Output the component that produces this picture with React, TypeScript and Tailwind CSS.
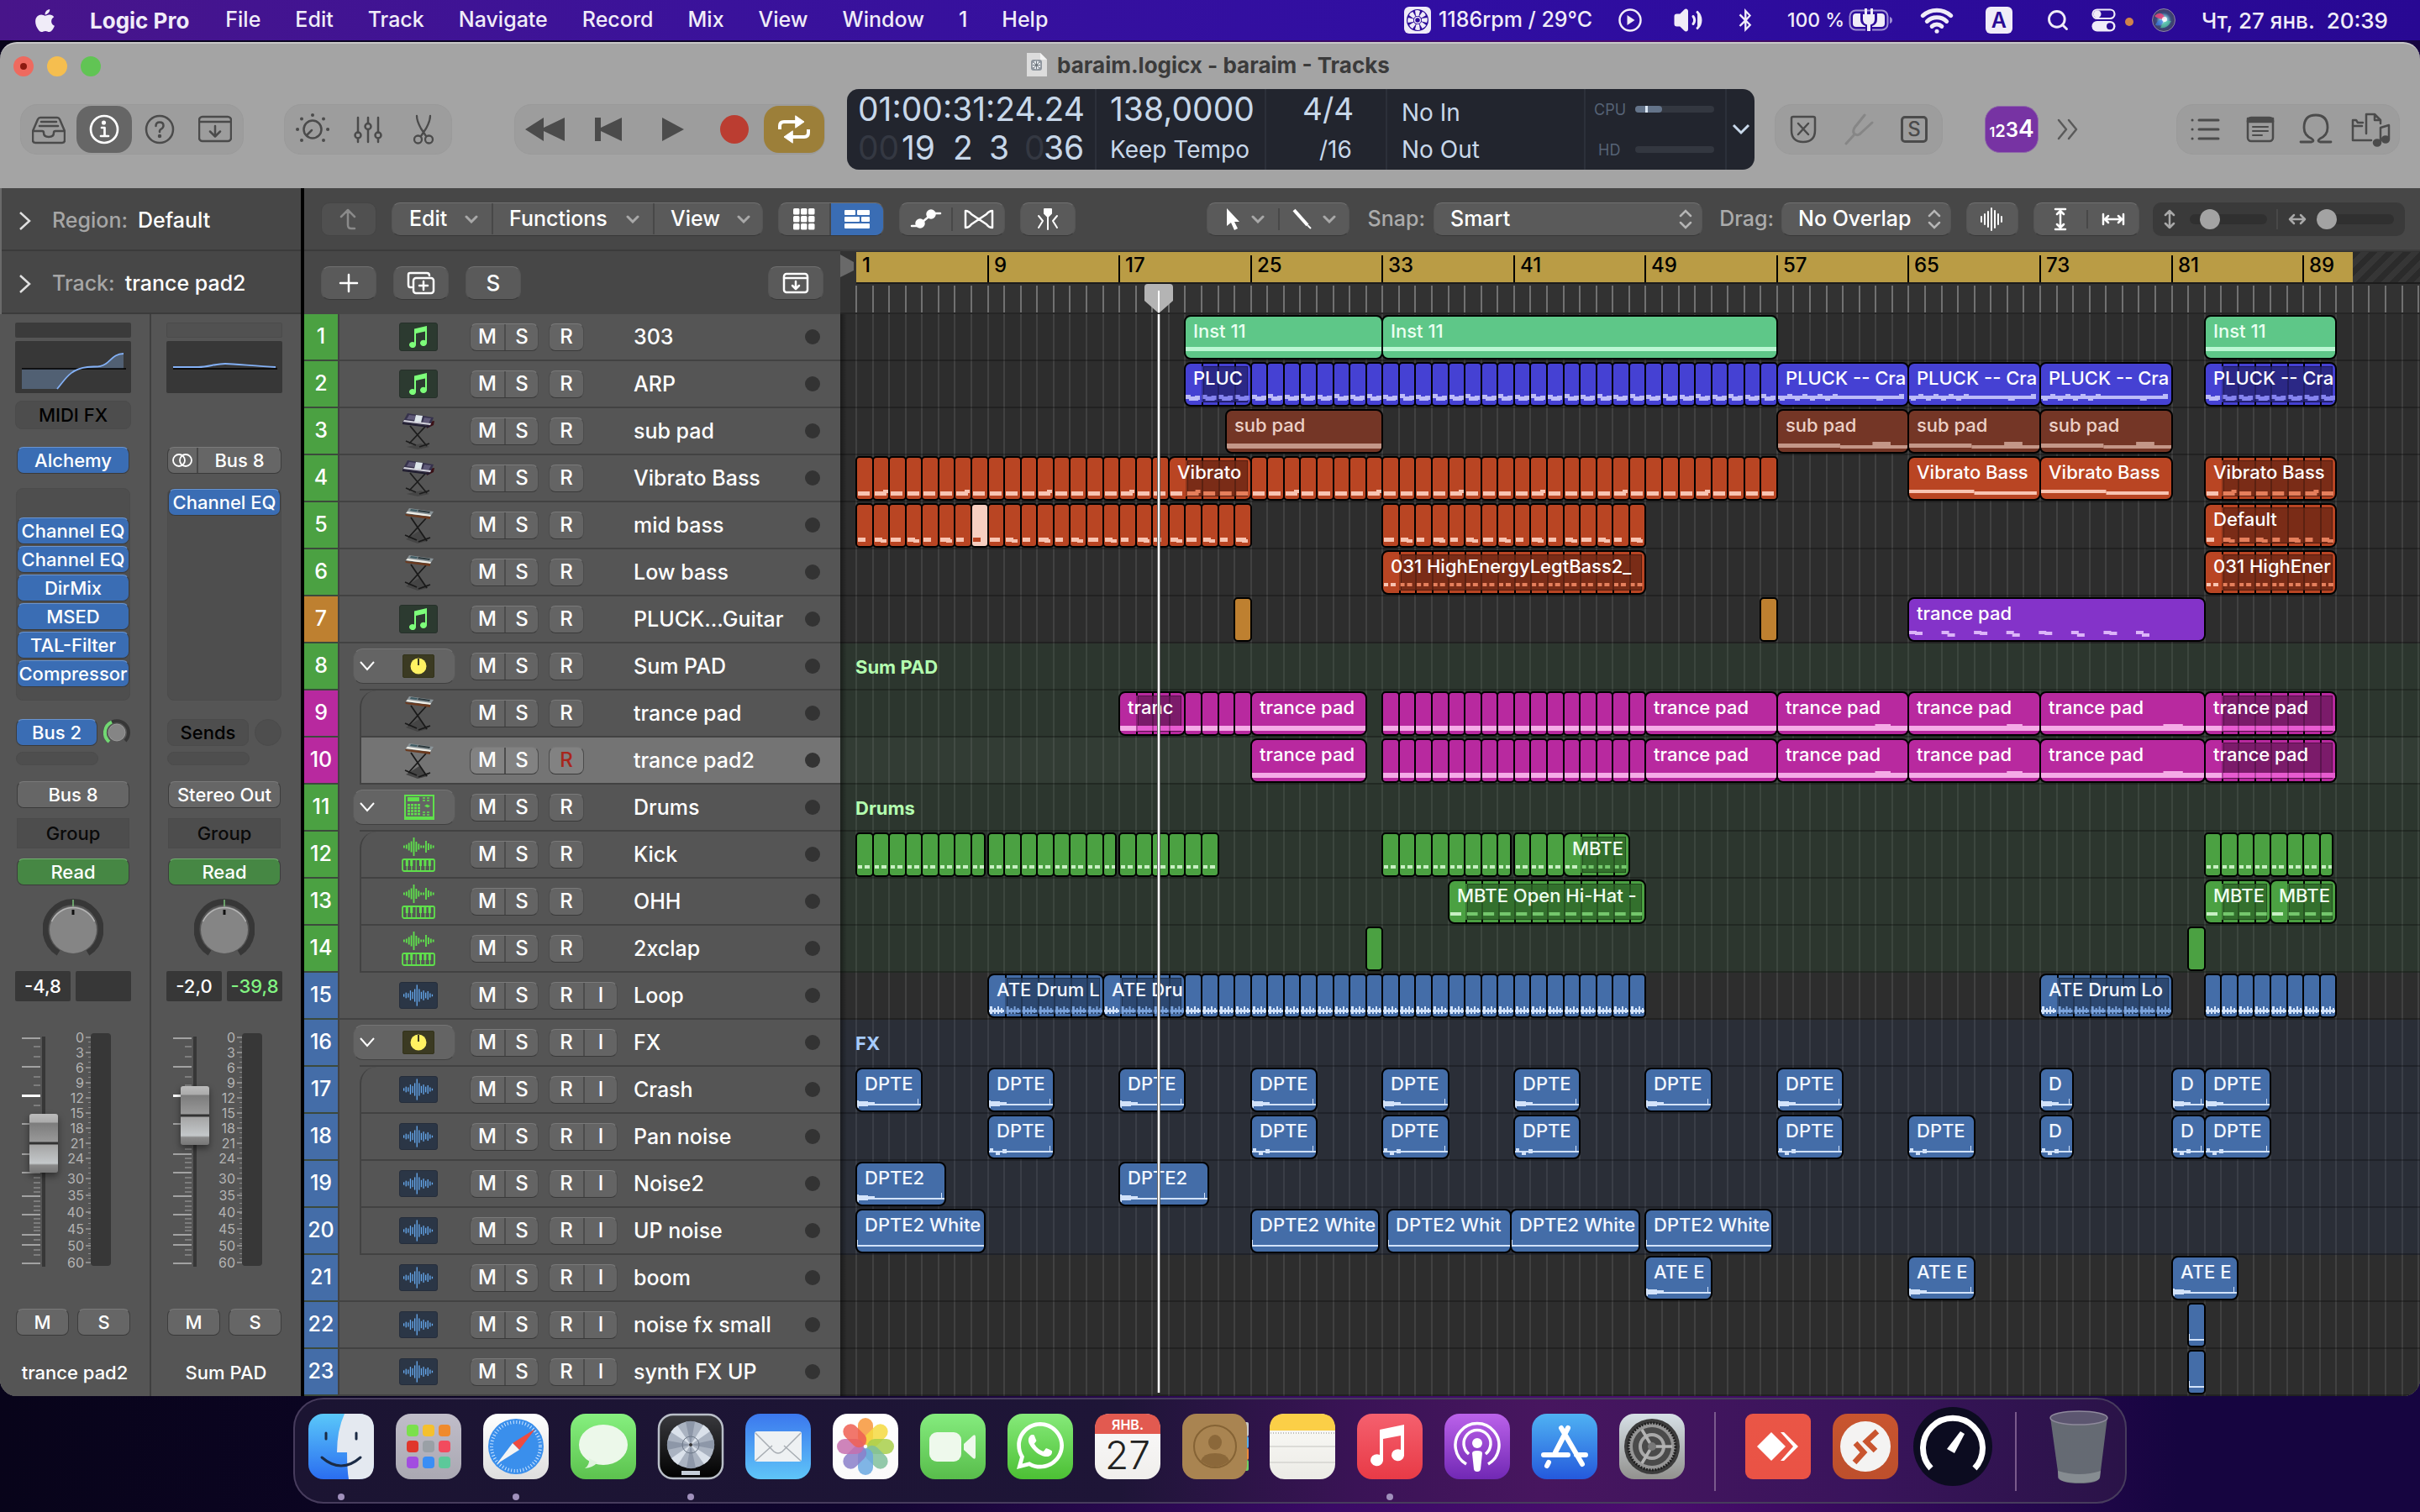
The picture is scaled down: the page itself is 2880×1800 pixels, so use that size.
import React from "react";
import { FaApple, FaBluetoothB, FaWhatsapp } from "react-icons/fa";
import { Volume2, Wifi, Search } from "lucide-react";

/* ------------------------------------------------------------------ */
/* Timeline geometry                                                   */
/* ------------------------------------------------------------------ */
const barX = (bar: number) => Math.round(19 + (bar - 1) * 19.57);
const BARS = Array.from({ length: 96 }, (_, i) => i + 1);
const MAJOR = [1, 9, 17, 25, 33, 41, 49, 57, 65, 73, 81, 89];

type Palette = { base: string; dark: string; note: string; noteDark: string; text: string };
const PAL: Record<string, Palette> = {
  mint: { base: "#5ec788", dark: "#3c8a5b", note: "#bbf7d3", noteDark: "#8adfae", text: "#eafff1" },
  blue: { base: "#4541d3", dark: "#2b2886", note: "#bdbcf8", noteDark: "#8583ef", text: "#ffffff" },
  brown: { base: "#743626", dark: "#4a2015", note: "#c49788", noteDark: "#9d6a59", text: "#ecd0c6" },
  orange: { base: "#b94523", dark: "#7a2c17", note: "#f8c4b2", noteDark: "#e57f5c", text: "#ffffff" },
  amber: { base: "#be8030", dark: "#7e531c", note: "#be8030", noteDark: "#be8030", text: "#ffffff" },
  purple: { base: "#8433c9", dark: "#551f84", note: "#dcb4f8", noteDark: "#b070e8", text: "#ffffff" },
  magenta: { base: "#b8299f", dark: "#7b1b6a", note: "#f5abe7", noteDark: "#e75bd0", text: "#ffffff" },
  green: { base: "#4ba142", dark: "#33702d", note: "#c9f0c4", noteDark: "#74c76c", text: "#f0fff0" },
  azure: { base: "#446da8", dark: "#2c4871", note: "#d3e3fa", noteDark: "#7ba3dc", text: "#f2f7ff" },
};

type Mark =
  | "none" | "line" | "low" | "cell" | "mid" | "pluck" | "pluckRun" | "sub" | "step"
  | "dots" | "hat" | "wave" | "burst" | "zig" | "thin" | "arp" | "bump";
type Region = { s: number; e: number; c: string; label?: string; loop?: boolean; mark?: Mark; hot?: boolean; seed?: number };

const r = (s: number, e: number, c: string, mark: Mark, label?: string, loop?: boolean): Region => ({ s, e, c, mark, label, loop });
const cells = (from: number, to: number, c: string, mark: Mark, gapEnd = false): Region[] =>
  Array.from({ length: to - from }, (_, i) => ({
    s: from + i,
    e: gapEnd && i === to - from - 1 ? to - 0.2 : from + i + 1,
    c,
    mark,
    seed: from + i,
  }));

function markRects(kind: Mark, w: number, seed: number): number[][] {
  const out: number[][] = [];
  const step = 19.57;
  const n = Math.max(1, Math.round(w / step));
  switch (kind) {
    case "line":
      return [[0, 3, w, 5]];
    case "low":
      return [[0, 6, w, 6]];
    case "bump":
      return [[0, 6, w, 6], [w * 0.75, 4, w * 0.12, 3]];
    case "cell":
      for (let i = 0; i < n; i++) {
        out.push([i * step + 1, 7, 14, 5]);
        if ((seed + i) % 5 === 2) out.push([i * step + 11, 5, 6, 4]);
      }
      return out;
    case "mid":
      for (let i = 0; i < n; i++) {
        out.push([i * step + 1, 6, (seed + i) % 3 ? 9 : 12, 5]);
        if ((seed + i) % 2 === 0) out.push([i * step + 8, 8, 7, 4]);
      }
      return out;
    case "pluck":
      for (let i = 0; i < n; i++) {
        const x = i * step;
        out.push([x, 3 + (seed % 2), 6, 5], [x + 4, 6, 11, 5], [x + 11, 5, 6, 5]);
      }
      return out;
    case "pluckRun": {
      out.push([0, 5, w - 4, 4]);
      for (let i = 0; i < 8; i++) out.push([2 + i * 9, i % 2 ? 3 : 7, 6, 4]);
      out.push([w * 0.76, 7, 8, 4], [w - 10, 3, 6, 4]);
      return out;
    }
    case "sub":
      return [[0, 6, w * 0.48, 5], [w * 0.48, 8, w * 0.52, 4], [w * 0.73, 4, w * 0.14, 4]];
    case "step":
      return [[0, 5, w * 0.5, 4], [w * 0.5, 7, w * 0.48, 4]];
    case "arp":
      for (let i = 0; i < 8; i++) {
        const x = i * (w / 9.1);
        out.push([x, 5, 9, 4], [x + 7, i % 2 ? 8 : 6, 9, 4]);
      }
      return out;
    case "dots":
      for (let i = 0; i < n; i++) out.push([i * step + 1, 4, 5, 4], [i * step + 9, 4, 6, 4]);
      return out;
    case "hat":
      for (let i = 0; i < n; i++) out.push([i * step + 1, 4, 13, 4]);
      return out;
    case "wave":
      for (let i = 0; i < n; i++) {
        const x = i * step;
        out.push([x, 8, 18, 3], [x + 1, 4, 3, 9], [x + 6, 6, 2, 7], [x + 10, 4, 2, 9], [x + 14, 6, 2, 6]);
      }
      return out;
    case "burst":
      return [[0, 8, w, 2], [0, 4, 2, 9], [2, 5, 11, 6], [13, 6, 8, 4], [w - 4, 2, 1, 7]];
    case "zig":
      return [[0, 8, w, 2], [1, 5, 4, 4], [8, 8, 5, 5], [16, 6, 5, 5], [w - 4, 2, 1, 7]];
    case "thin":
      return [[0, 8, w, 2], [0, 2, 1, 7]];
    default:
      return [];
  }
}

function RegionBox({ s, e, c, label, loop, mark = "none", hot, seed = 1 }: Region) {
  const p = PAL[c];
  const x = barX(s);
  const w = barX(e) - x + 2;
  const small = w < 24;
  const inner = w - 4;
  const rects = markRects(mark, inner, seed);
  const divisions = loop ? Array.from({ length: Math.round(e - s) - 1 }, (_, i) => (i + 1) * 19.57) : [];
  return (
    <div
      className={`absolute top-px h-[53px] overflow-hidden border-2 border-black ${small ? "rounded-[5px]" : "rounded-lg"}`}
      style={{ left: x - 1, width: w, background: hot ? "#f7cfc1" : p.base }}
    >
      {loop && (
        <div
          className="absolute top-[3px] right-[3px] bottom-[3px] left-[21px] border border-black/30"
          style={{ background: p.dark }}
        />
      )}
      <svg className="absolute top-[33px] left-0" width={inner} height="16" aria-hidden="true">
        {rects.map(([rx, ry, rw, rh], i) => (
          <rect key={i} x={rx} y={ry} width={rw} height={rh} fill={hot ? "#b94523" : loop && rx > 18 ? p.noteDark : p.note} />
        ))}
        {loop && (mark === "low" || mark === "bump") && <rect x="19" y="6" width={inner} height="6" fill={p.noteDark} />}
      </svg>
      {divisions.map((d) => (
        <React.Fragment key={d}>
          <div className="absolute top-0 h-full w-[2px] bg-black/25" style={{ left: Math.round(d) - 1 }} />
          <div className="absolute top-0 h-[3px] w-[2px] bg-black" style={{ left: Math.round(d) - 1 }} />
          <div className="absolute bottom-0 h-[3px] w-[2px] bg-black" style={{ left: Math.round(d) - 1 }} />
        </React.Fragment>
      ))}
      {label && (
        <span
          className="absolute top-1 right-0 left-[9px] overflow-hidden text-[22px] leading-[26px] font-medium whitespace-nowrap"
          style={{ color: p.text }}
        >
          {label}
        </span>
      )}
    </div>
  );
}

/* ------------------------------------------------------------------ */
/* Tracks                                                              */
/* ------------------------------------------------------------------ */
type TrackIcon = "note" | "synth" | "keys" | "sum" | "machine" | "sampler" | "audio";
type Track = {
  name: string;
  color: "green" | "amber" | "magenta" | "blue";
  icon: TrackIcon;
  input?: boolean;
  stack?: boolean;
  nested?: "first" | "mid" | "last";
  selected?: boolean;
  tint?: "green" | "blue";
  title?: string;
  regions: Region[];
};

const dpte = (at: number[], mark: Mark) => [
  ...at.map((b) => r(b, b + 4, "azure", mark, "DPTE")),
  r(73, 75, "azure", mark, "D"),
  r(81, 83, "azure", mark, "D"),
  r(83, 87, "azure", mark, "DPTE"),
];

const padTail: Region[] = [
  r(25, 32, "magenta", "low", "trance pad"),
  ...cells(33, 49, "magenta", "low"),
  r(49, 57, "magenta", "low", "trance pad"),
  r(57, 65, "magenta", "bump", "trance pad"),
  r(65, 73, "magenta", "bump", "trance pad"),
  r(73, 83, "magenta", "bump", "trance pad"),
  r(83, 91, "magenta", "low", "trance pad", true),
];

const TRACKS: Track[] = [
  { name: "303", color: "green", icon: "note", regions: [r(21, 33, "mint", "line", "Inst 11"), r(33, 57, "mint", "line", "Inst 11"), r(83, 91, "mint", "line", "Inst 11")] },
  {
    name: "ARP", color: "green", icon: "note",
    regions: [
      r(21, 25, "blue", "pluck", "PLUC", true),
      ...cells(25, 57, "blue", "pluck"),
      r(57, 65, "blue", "pluckRun", "PLUCK -- Cra"),
      r(65, 73, "blue", "pluckRun", "PLUCK -- Cra"),
      r(73, 81, "blue", "pluckRun", "PLUCK -- Cra"),
      r(83, 91, "blue", "pluck", "PLUCK -- Cra", true),
    ],
  },
  { name: "sub pad", color: "green", icon: "synth", regions: [r(23.5, 33, "brown", "low", "sub pad"), r(57, 65, "brown", "sub", "sub pad"), r(65, 73, "brown", "sub", "sub pad"), r(73, 81, "brown", "sub", "sub pad")] },
  {
    name: "Vibrato Bass", color: "green", icon: "synth",
    regions: [
      ...cells(1, 20, "orange", "cell"),
      r(20, 25, "orange", "cell", "Vibrato", true),
      ...cells(25, 57, "orange", "cell"),
      r(65, 73, "orange", "step", "Vibrato Bass"),
      r(73, 81, "orange", "step", "Vibrato Bass"),
      r(83, 91, "orange", "cell", "Vibrato Bass", true),
    ],
  },
  {
    name: "mid bass", color: "green", icon: "keys",
    regions: [
      ...cells(1, 8, "orange", "mid"),
      { s: 8, e: 9, c: "orange", mark: "mid", hot: true },
      ...cells(9, 25, "orange", "mid"),
      ...cells(33, 49, "orange", "mid"),
      r(83, 91, "orange", "mid", "Default", true),
    ],
  },
  { name: "Low bass", color: "green", icon: "keys", regions: [r(33, 49, "orange", "dots", "031 HighEnergyLegtBass2_", true), r(83, 91, "orange", "dots", "031 HighEner", true)] },
  { name: "PLUCK...Guitar", color: "amber", icon: "note", regions: [r(24, 25, "amber", "none"), r(56, 57, "amber", "none"), r(65, 83, "purple", "arp", "trance pad")] },
  { name: "Sum PAD", color: "green", icon: "sum", stack: true, tint: "green", title: "Sum PAD", regions: [] },
  {
    name: "trance pad", color: "magenta", icon: "keys", nested: "first", tint: "green",
    regions: [r(17, 21, "magenta", "low", "tranc", true), ...cells(21, 25, "magenta", "low"), ...padTail],
  },
  { name: "trance pad2", color: "magenta", icon: "keys", nested: "last", selected: true, tint: "green", regions: padTail },
  { name: "Drums", color: "green", icon: "machine", stack: true, tint: "green", title: "Drums", regions: [] },
  {
    name: "Kick", color: "green", icon: "sampler", nested: "first", tint: "green",
    regions: [
      ...cells(1, 9, "green", "dots", true),
      ...cells(9, 17, "green", "dots", true),
      ...cells(17, 23, "green", "dots"),
      ...cells(33, 41, "green", "dots", true),
      ...cells(41, 44, "green", "dots"),
      r(44, 48, "green", "dots", "MBTE", true),
      ...cells(83, 91, "green", "dots", true),
    ],
  },
  { name: "OHH", color: "green", icon: "sampler", nested: "mid", tint: "green", regions: [r(37, 49, "green", "hat", "MBTE Open Hi-Hat -", true), r(83, 87, "green", "hat", "MBTE", true), r(87, 91, "green", "hat", "MBTE", true)] },
  { name: "2xclap", color: "green", icon: "sampler", nested: "last", tint: "green", regions: [r(32, 33, "green", "none"), r(82, 83, "green", "none")] },
  {
    name: "Loop", color: "blue", icon: "audio", input: true,
    regions: [
      r(9, 16, "azure", "wave", "ATE Drum L", true),
      r(16, 21, "azure", "wave", "ATE Dru", true),
      ...cells(21, 49, "azure", "wave"),
      r(73, 81, "azure", "wave", "ATE Drum Lo", true),
      ...cells(83, 91, "azure", "wave"),
    ],
  },
  { name: "FX", color: "blue", icon: "sum", stack: true, input: true, tint: "blue", title: "FX", regions: [] },
  { name: "Crash", color: "blue", icon: "audio", nested: "first", input: true, tint: "blue", regions: dpte([1, 9, 17, 25, 33, 41, 49, 57], "burst") },
  { name: "Pan noise", color: "blue", icon: "audio", nested: "mid", input: true, tint: "blue", regions: dpte([9, 25, 33, 41, 57, 65], "zig") },
  { name: "Noise2", color: "blue", icon: "audio", nested: "mid", input: true, tint: "blue", regions: [r(1, 6.4, "azure", "burst", "DPTE2"), r(17, 22.4, "azure", "burst", "DPTE2")] },
  {
    name: "UP noise", color: "blue", icon: "audio", nested: "last", input: true, tint: "blue",
    regions: [
      r(1, 8.8, "azure", "thin", "DPTE2 White"),
      r(25, 32.8, "azure", "thin", "DPTE2 White"),
      r(33.3, 40.8, "azure", "thin", "DPTE2 Whit"),
      r(40.8, 48.6, "azure", "thin", "DPTE2 White"),
      r(49, 56.7, "azure", "thin", "DPTE2 White"),
    ],
  },
  { name: "boom", color: "blue", icon: "audio", input: true, regions: [r(49, 53, "azure", "burst", "ATE E"), r(65, 69, "azure", "burst", "ATE E"), r(81, 85, "azure", "burst", "ATE E")] },
  { name: "noise fx small", color: "blue", icon: "audio", input: true, regions: [r(82, 83, "azure", "thin")] },
  { name: "synth FX UP", color: "blue", icon: "audio", input: true, regions: [r(82, 83, "azure", "thin")] },
];

const NUM_BG = { green: "bg-[#4ba142]", amber: "bg-[#be8030]", magenta: "bg-[#b8299f]", blue: "bg-[#446da8]" };

/* ------------------------------------------------------------------ */
/* Track icons                                                         */
/* ------------------------------------------------------------------ */
function AudioWave({ color }: { color: string }) {
  const bars = [4, 8, 6, 14, 10, 18, 30, 18, 10, 14, 8, 12, 6, 3];
  return (
    <svg width="36" height="28" viewBox="0 0 36 28" aria-hidden="true">
      {bars.map((h, i) => (
        <rect key={i} x={i * 2.6} y={14 - h * 0.42} width="1.3" height={h * 0.84} fill={color} />
      ))}
    </svg>
  );
}

function TrackIconView({ icon }: { icon: TrackIcon }) {
  switch (icon) {
    case "note":
      return (
        <span className="flex h-[34px] w-[46px] items-center justify-center rounded-[3px] border border-[#26302a] bg-[#2c3a30]">
          <svg width="22" height="26" viewBox="0 0 22 26" fill="#7dff7a" aria-hidden="true">
            <path d="M6 3.5 21 0v20.2a4 3.6 0 1 1-2-3V6.6L8 9v13.4a4 3.6 0 1 1-2-3Z" />
          </svg>
        </span>
      );
    case "audio":
      return (
        <span className="flex h-[32px] w-[46px] items-center justify-center rounded-[3px] border border-[#252d3b] bg-[#2b3646]">
          <AudioWave color="#66aaf0" />
        </span>
      );
    case "sum":
      return (
        <span className="flex h-[28px] w-[38px] items-center justify-center rounded-[2px] border border-[#33331a] bg-[#3b3a22]">
          <svg width="20" height="20" viewBox="0 0 20 20" aria-hidden="true">
            <circle cx="10" cy="10" r="9.5" fill="#fff262" />
            <path d="M10 1v8" stroke="#3b3a22" strokeWidth="2" />
          </svg>
        </span>
      );
    case "machine":
      return (
        <svg width="36" height="30" viewBox="0 0 36 30" aria-hidden="true">
          <rect x="1" y="1" width="34" height="28" fill="none" stroke="#5fe04c" strokeWidth="2" />
          <rect x="4" y="3" width="14" height="5" fill="#5fe04c" />
          {[0, 1, 2, 3].flatMap((a) => [0, 1, 2, 3].map((b) => <rect key={`${a}${b}`} x={4 + a * 4} y={11 + b * 3.6} width="3" height="2.6" fill="#5fe04c" />))}
          <path d="M22 4h3m2 0h3m-8 3h3m2 0h3m-8 14h3m2 0h3m-8 3h3m2 0h3" stroke="#5fe04c" strokeWidth="1.4" />
          <path d="m24 13.500 3-2 4 2-3 2z" fill="#5fe04c" />
          <rect x="1" y="26" width="34" height="3" fill="#5fe04c" />
        </svg>
      );
    case "sampler":
      return (
        <svg width="40" height="46" viewBox="0 0 40 46" aria-hidden="true">
          {[3, 5, 9, 13, 22, 12, 7, 3, 3, 14, 8, 5, 3].map((h, i) => (
            <rect key={i} x={2 + i * 2.9} y={14 - h / 2} width="1.800" height={h} fill="#5fe04c" />
          ))}
          <rect x="1" y="29" width="38" height="14" rx="2" fill="none" stroke="#5fe04c" strokeWidth="1.800" />
          {[1, 2, 3, 4, 5, 6].map((i) => (
            <path key={i} d={`M${1 + i * 5.4} 29v14`} stroke="#5fe04c" strokeWidth="1.200" />
          ))}
          {[1, 2, 4, 5, 6].map((i) => (
            <rect key={i} x={i * 5.4 - 0.6} y="29" width="3" height="8" fill="#5fe04c" />
          ))}
        </svg>
      );
    case "synth":
      return (
        <svg width="42" height="46" viewBox="0 0 42 46" aria-hidden="true">
          <path d="M7 42 24 38l10 4-14 3Z" fill="#454545" />
          <path d="M11 17 31 41m-2-23L10 38m-4-3 12 5m4 2 12-4" stroke="#1d1d1d" strokeWidth="1.800" fill="none" />
          <path d="m30 13 10-2-1 5-8 4Z" fill="#3a1015" />
          <path d="M8 2 39 7 35 17 2 13Z" fill="#36324c" />
          <path d="M10 4 18 5l-2 5-9-1Z" fill="#5f5a78" />
          <path d="m28 7 8 1-3 6-7-1Z" fill="#5f5a78" />
          <path d="m18 4 8 1-2 8-8-1Z" fill="#dfe7ec" />
          <path d="m3 12 32 4 1-2-32-4Z" fill="#d4d4dc" />
          <path d="m2 13 32 4v2L2 15Z" fill="#201d30" />
        </svg>
      );
    case "keys":
      return (
        <svg width="42" height="46" viewBox="0 0 42 46" aria-hidden="true">
          <path d="M6 40 22 30l10 12-12 3Z" fill="#454545" />
          <path d="M12 14 31 42m-1-27L9 38m-4-3 14 6m2 2 14-5" stroke="#1a1a1a" strokeWidth="1.800" fill="none" />
          <path d="M10 3 39 7l-4 6L6 9Z" fill="#8a9498" />
          <path d="m12 4 8 1-1 2-8-1Z" fill="#3e5a62" />
          <path d="m21 5 14 2-1 2-14-2Z" fill="#2e3a3e" />
          <path d="m6 9 29 4 1-2-28-4Z" fill="#f0efe8" />
          <path d="m5 10 30 3v3L6 12Z" fill="#6b3a1f" />
        </svg>
      );
  }
}

function MiniGroup({ items, name, armed, selected }: { items: string[]; name: string; armed?: boolean; selected?: boolean }) {
  const labels: Record<string, string> = { M: "Mute", S: "Solo", R: "Record enable", I: "Input monitoring" };
  return (
    <span className={`flex h-[33px] overflow-hidden rounded-lg border border-x-[#4b4b4b] border-t-[#7a7a7a] border-b-[#3a3a3a] ${selected ? "bg-[#828282]" : "bg-[#646464]"}`}>
      {items.map((t, i) => (
        <button
          key={t}
          type="button"
          aria-label={`${labels[t]} ${name}`}
          className={`flex w-[40px] items-center justify-center text-[24px] leading-none font-medium ${i > 0 ? "border-l-2 border-[#4c4c4c]" : ""} ${armed && t === "R" ? "text-[#a8261c]" : "text-white"}`}
        >
          {t}
        </button>
      ))}
    </span>
  );
}

function TrackRow({ t, n }: { t: Track; n: number }) {
  const nested = !!t.nested;
  const connected = nested || t.stack;
  return (
    <li className="flex h-14 shrink-0 bg-[#555555]">
      <span className={`flex w-10 items-center justify-center border-b-2 border-[#3c4a3c] text-[25px] font-medium text-white ${NUM_BG[t.color]}`}>{n}</span>
      <span className={`w-[26px] border-l-2 border-[#424242] ${connected ? "" : "border-b-2"}`} />
      <div
        className={`flex flex-1 items-center border-b-2 border-[#424242] ${nested ? "border-l-2" : ""} ${t.nested === "first" ? "rounded-tl-[20px]" : ""} ${t.selected ? "bg-[#747474]" : ""}`}
      >
        <span className={`flex w-[140px] items-center justify-center ${nested ? "-ml-[2px]" : ""}`}>
          {t.stack ? (
            <button
              type="button"
              aria-label={`Collapse ${t.name}`}
              className="-ml-[34px] flex h-[42px] w-[122px] items-center rounded-xl border border-x-[#5a5a5a] border-t-[#757575] border-b-[#404040] bg-[#646464] px-[6px]"
            >
              <svg width="20" height="12" viewBox="0 0 20 12" fill="none" stroke="#fff" strokeWidth="2" aria-hidden="true"><path d="m2 1 8 9 8-9" /></svg>
              <span className="mr-[18px] ml-auto flex"><TrackIconView icon={t.icon} /></span>
            </button>
          ) : (
            <TrackIconView icon={t.icon} />
          )}
        </span>
        <span className="-ml-[9px] flex w-[195px] gap-3">
          <MiniGroup items={["M", "S"]} name={t.name} selected={t.selected} />
          <MiniGroup items={t.input ? ["R", "I"] : ["R"]} name={t.name} armed={t.selected} selected={t.selected} />
        </span>
        <span className="flex-1 text-[25px] leading-8 font-medium whitespace-nowrap text-white">{t.name}</span>
        <span className="mr-6 size-[18px] rounded-full bg-[#333]" />
      </div>
    </li>
  );
}

/* ------------------------------------------------------------------ */
/* Channel strips                                                      */
/* ------------------------------------------------------------------ */
const SLOT = "flex h-8 items-center justify-center rounded-lg border border-x-[#3d3d3d] border-b-[#3a3a3a] text-[22px] leading-none font-medium text-white";
const BLUE = "border-t-[#6a94cf] bg-[#3a6db4]";
const GREY = "border-t-[#7a7a7a] bg-[#666]";
const EMPTY = "flex h-8 items-center justify-center rounded-lg border border-[#4b4b4b] bg-[#4e4e4e] text-[22px] leading-none font-medium text-black";

function Knob() {
  return (
    <svg width="72" height="72" viewBox="0 0 72 72" role="img" aria-label="Pan, centre">
      <path d="M18.500 64.500A33 33 0 1 1 53.500 64.500" fill="none" stroke="#373737" strokeWidth="7" />
      <path d="M36 1v8" stroke="#7bc47b" strokeWidth="1.500" />
      <circle cx="36" cy="37" r="28" fill="#858585" />
      <path d="M10.500 27A28 28 0 0 1 61.500 27" fill="none" stroke="#b5b5b5" strokeWidth="1.500" />
      <path d="M36 13v6" stroke="#111" strokeWidth="3" />
    </svg>
  );
}

const MAJOR_TICKS = [3, 37, 105, 141, 163, 191, 213, 237, 249, 271];
const MINOR_TICKS = [13, 25, 49, 59, 83, 94, 116, 123, 129, 135, 146, 151, 157, 169, 175, 181, 186, 197, 203, 208, 218, 223, 228, 232, 243, 255, 261];

function FaderArea({ name, value }: { name: string; value: number }) {
  return (
    <div className="flex h-[292px] pt-[4px]">
      <svg className="mt-[2px] ml-2" width="22" height="280" aria-hidden="true">
        {MAJOR_TICKS.map((y) => <rect key={y} x="0" y={y} width="22" height="2" fill="#a2a2a2" />)}
        <rect x="0" y="71" width="22" height="3" fill="#fff" />
        {MINOR_TICKS.map((y) => <rect key={y} x="14" y={y} width="8" height="2" fill="#7d7d7d" />)}
      </svg>
      <input
        type="range"
        aria-label={`${name} volume`}
        min={0}
        max={100}
        defaultValue={value}
        className="relative mt-1 -ml-[13px] h-[274px] w-[34px] appearance-none bg-[linear-gradient(90deg,transparent_15px,#373737_15px,#373737_19px,transparent_19px)] [direction:rtl] [writing-mode:vertical-lr] [&::-webkit-slider-thumb]:h-[70px] [&::-webkit-slider-thumb]:w-[34px] [&::-webkit-slider-thumb]:appearance-none [&::-webkit-slider-thumb]:rounded-[3px] [&::-webkit-slider-thumb]:bg-[linear-gradient(180deg,#bbb_0px,#ababab_10px,#7c7c7c_11px,#999_33px,#333_34px,#333_36px,#a5a5a5_37px,#c4c8ca_59px,#8a8a8a_61px,#777_70px)] [&::-webkit-slider-thumb]:shadow-[0_4px_8px_rgba(0,0,0,0.45)]"
      />
      <div className="-mt-1 ml-1 w-[27px] text-right text-[16px] text-[#b4b4b4]">
        {[0, 3, 6, 9, 12, 15, 18, 21, 24].map((v) => <div key={v} className="leading-[18px]">{v}</div>)}
        <div className="mt-[5px]">
          {[30, 35, 40, 45, 50, 60].map((v) => <div key={v} className="leading-5">{v}</div>)}
        </div>
      </div>
      <svg width="8" height="280" aria-hidden="true">
        {Array.from({ length: 45 }, (_, i) => <rect key={i} x="5" y={4 + i * 6} width="3" height="1" fill="#8c8c8c" />)}
        {[4, 22, 40, 58, 76, 94, 112, 130, 148, 172, 192, 212, 232, 252, 272].map((y) => <rect key={y} x="2" y={y} width="6" height="2" fill="#8c8c8c" />)}
      </svg>
      <span className="h-[277px] w-6 rounded-[4px] bg-[#373737]" />
    </div>
  );
}

function Strip({ kind }: { kind: "inst" | "bus" }) {
  const inst = kind === "inst";
  const name = inst ? "trance pad2" : "Sum PAD";
  return (
    <section aria-label={name} className={`flex flex-col pl-[18px] ${inst ? "w-[180px] border-r-2 border-[#3f3f3f]" : "w-[178px]"}`}>
      <div className="flex w-[138px] flex-col">
        <span className={`mt-[10px] h-[18px] rounded-[2px] ${inst ? "bg-[#3b3b3b]" : "border border-[#4b4b4b] bg-[#515151]"}`} />
        <svg className="mt-1 rounded-[2px] bg-[#373737]" width="138" height="62" viewBox="0 0 138 62" aria-hidden="true">
          {inst ? (
            <>
              <path d="M8 33h67C66 35 58 46 50 57H8Z" fill="#516073" />
              <path d="M76 33C92 30 98 32 107 27s10-12 22-12v18Z" fill="#516073" />
              <path d="M8 33h124" stroke="#000" strokeWidth="1.500" />
              <path d="M50 57C60 45 66 33 86 31c12-1 16 0 22-4s10-12 21-12" fill="none" stroke="#83b0f5" strokeWidth="1.800" />
            </>
          ) : (
            <>
              <path d="M8 33h124" stroke="#000" strokeWidth="1.500" />
              <path d="M8 31h30c12 0 20-4 32-4s36 3 60 4" fill="none" stroke="#83b0f5" strokeWidth="2" />
            </>
          )}
        </svg>
        {inst ? (
          <button type="button" className="mt-[9px] flex h-[34px] items-center justify-center rounded-lg border border-[#4b4b4b] bg-[#4d4d4d] text-[22px] leading-none font-medium text-black">MIDI FX</button>
        ) : (
          <span className="mt-[9px] h-[34px]" />
        )}
        {inst ? (
          <button type="button" className={`mx-[2px] mt-[21px] ${SLOT} ${BLUE}`}>Alchemy</button>
        ) : (
          <span className={`mx-px mt-[21px] overflow-hidden ${SLOT} ${GREY}`}>
            <button type="button" aria-label="Stereo format" className="flex h-full w-9 items-center justify-center border-r-2 border-[#484848]">
              <svg width="26" height="16" viewBox="0 0 26 16" fill="none" stroke="#fff" strokeWidth="1.800" aria-hidden="true"><circle cx="9" cy="8" r="7" /><circle cx="17" cy="8" r="7" /></svg>
            </button>
            <button type="button" className="flex-1 text-center">Bus 8</button>
          </span>
        )}
        <div className={`mx-px mt-[17px] flex h-[253px] flex-col gap-[2px] rounded-lg border border-[#4b4b4b] bg-[#4e4e4e] ${inst ? "pt-[34px]" : ""}`}>
          {(inst ? ["Channel EQ", "Channel EQ", "DirMix", "MSED", "TAL-Filter", "Compressor"] : ["Channel EQ"]).map((s, i) => (
            <button key={i} type="button" className={`shrink-0 ${SLOT} ${BLUE}`}>{s}</button>
          ))}
        </div>
        <div className="mx-px mt-[22px] flex items-center justify-between">
          <button type="button" className={`w-[97px] ${inst ? `${SLOT} ${BLUE}` : EMPTY}`}>{inst ? "Bus 2" : "Sends"}</button>
          {inst ? (
            <svg width="32" height="32" viewBox="0 0 32 32" role="img" aria-label="Send level">
              <path d="M6 26A14 14 0 1 1 26 26" fill="none" stroke="#373737" strokeWidth="4" />
              <path d="M7 27A14 14 0 0 1 10 3.500" fill="none" stroke="#72d873" strokeWidth="4" />
              <circle cx="16" cy="16" r="10" fill="#858585" stroke="#a4a4a4" strokeWidth="0.800" />
            </svg>
          ) : (
            <span className="size-8 rounded-full border border-[#4b4b4b] bg-[#4e4e4e]" />
          )}
        </div>
        <span className="mt-[7px] ml-px h-4 w-[98px] rounded-full border border-[#4b4b4b] bg-[#4e4e4e]" />
        <button type="button" className={`mx-[2px] mt-[19px] ${SLOT} ${GREY}`}>{inst ? "Bus 8" : "Stereo Out"}</button>
        <button type="button" className="mx-[2px] mt-3 flex h-9 items-center justify-center border border-[#4a4a4a] bg-[#4d4d4d] text-[22px] leading-none font-medium text-[#0a0a0a]">Group</button>
        <button type="button" className={`mx-[2px] mt-3 border-t-[#72b170] bg-[#468744] ${SLOT}`}>Read</button>
        <div className="mt-4 flex justify-center"><Knob /></div>
        <div className="mt-[14px] flex gap-[6px] text-[22px] leading-9 font-medium">
          <span className="h-9 w-[66px] rounded-[2px] bg-[#373737] text-center text-white">{inst ? "-4,8" : "-2,0"}</span>
          <span className="h-9 w-[66px] rounded-[2px] bg-[#373737] text-center text-[#82f582]">{inst ? "" : "-39,8"}</span>
        </div>
        <div className="mt-[34px]"><FaderArea name={name} value={inst ? 55 : 71} /></div>
        <div className="mx-px mt-10 flex justify-between">
          <button type="button" aria-label={`Mute ${name}`} className={`w-[63px] ${SLOT} ${GREY}`}>M</button>
          <button type="button" aria-label={`Solo ${name}`} className={`w-[63px] ${SLOT} ${GREY}`}>S</button>
        </div>
      </div>
      <p className="mt-7 -ml-[18px] text-center text-[22px] leading-8 font-medium text-white">{name}</p>
    </section>
  );
}

function DisclosureRow({ label, value }: { label: string; value: string }) {
  return (
    <button type="button" className="flex h-[75px] w-full items-center border-b-2 border-[#3b3b3b] pt-[5px] pl-[21px] text-left text-[25px] font-medium">
      <svg width="14" height="22" viewBox="0 0 14 22" fill="none" stroke="#e0e0e0" strokeWidth="2.500" aria-hidden="true"><path d="m1 1 11 10L1 21" /></svg>
      <span className="ml-[25px] text-[#a6a6a6]">{label}</span>
      <span className="ml-3 text-white">{value}</span>
    </button>
  );
}

/* ------------------------------------------------------------------ */
/* Menu bar                                                            */
/* ------------------------------------------------------------------ */
function MenuBar() {
  return (
    <header className="flex h-12 shrink-0 items-center bg-[linear-gradient(90deg,#48158a,#3a129b_30%,#300ea2_60%,#280893)] pr-[38px] pl-[38px] text-[25px] font-medium text-[#f0ecf8]">
      <nav className="flex items-center" aria-label="Menu bar">
        <a href="#apple" aria-label="Apple menu"><FaApple size={31} /></a>
        <a href="#logic" className="mr-[43px] ml-[38px] text-[26px] font-bold">Logic Pro</a>
        <span className="flex gap-[41px]">
          {["File", "Edit", "Track", "Navigate", "Record", "Mix", "View", "Window", "1", "Help"].map((m) => (
            <a key={m} href={`#${m}`}>{m}</a>
          ))}
        </span>
      </nav>
      <div className="ml-auto flex items-center">
        <svg width="32" height="32" viewBox="0 0 32 32" aria-hidden="true">
          <rect width="32" height="32" rx="6" fill="#efebf8" />
          <circle cx="16" cy="16" r="13" fill="#2d0c99" />
          {[0, 45, 90, 135, 180, 225, 270, 315].map((a) => (
            <path key={a} d="M14 11 13 4.500q3-1 6 .5L17.500 11Z" fill="#efebf8" transform={`rotate(${a} 16 16)`} />
          ))}
          <circle cx="16" cy="16" r="3.500" fill="none" stroke="#efebf8" strokeWidth="1.500" />
        </svg>
        <span className="ml-[9px] w-[176px] whitespace-nowrap">1186rpm / 29°C</span>
        <svg className="ml-[38px]" width="28" height="28" viewBox="0 0 28 28" aria-hidden="true">
          <circle cx="14" cy="14" r="12.500" fill="none" stroke="#f0ecf8" strokeWidth="2.500" />
          <path d="m10.500 8 9 6-9 6Z" fill="#f0ecf8" />
        </svg>
        <Volume2 className="ml-[37px]" size={36} fill="#f0ecf8" strokeWidth={2} />
        <FaBluetoothB className="ml-[36px]" size={28} />
        <span className="ml-[36px] w-[68px] text-[23px] whitespace-nowrap">100 %</span>
        <svg className="ml-[5px]" width="54" height="28" viewBox="0 0 54 28" aria-hidden="true">
          <rect x="1.500" y="2.500" width="45" height="23" rx="7" fill="none" stroke="#9f90d4" strokeWidth="2" />
          <rect x="5" y="6" width="38" height="16" rx="4" fill="#f0ecf8" />
          <path d="M49 10v8q3-1 3-4t-3-4" fill="#9f90d4" />
          <path d="M14 5h20v8q0 6-6 8v7h-8v-7q-6-2-6-8Z" fill="#2d0c99" />
          <path d="M17 7h14v6q0 5-5 6.500V27h-4v-7.500q-5-1.500-5-6.500ZM19 0h3v8h-3zM26 0h3v8h-3z" fill="#f0ecf8" />
        </svg>
        <Wifi className="ml-[31px]" size={40} strokeWidth={3} />
        <span className="ml-[38px] flex h-8 w-8 items-center justify-center rounded-[6px] bg-[#f0ecf8] text-[25px] leading-none font-semibold text-[#2a0a94]">A</span>
        <Search className="ml-[40px]" size={28} strokeWidth={2.500} />
        <svg className="ml-[26px]" width="30" height="28" viewBox="0 0 30 28" aria-hidden="true">
          <rect x="1.500" y="1.500" width="26" height="10.500" rx="5.200" fill="none" stroke="#f0ecf8" strokeWidth="2.200" />
          <circle cx="7" cy="6.700" r="4.500" fill="#f0ecf8" />
          <rect x="0.500" y="15" width="28" height="12.500" rx="6.200" fill="#f0ecf8" />
          <circle cx="22" cy="21.200" r="4" fill="#2a0a94" />
        </svg>
        <span className="mt-1 ml-[10px] size-[10px] rounded-full bg-[#d0824a]" />
        <svg className="ml-[22px]" width="28" height="28" viewBox="0 0 28 28" aria-label="Siri" role="img">
          <defs>
            <radialGradient id="siri"><stop offset="0" stopColor="#fff" /><stop offset="0.300" stopColor="#7ec6d8" /><stop offset="0.650" stopColor="#3a4a7c" /><stop offset="1" stopColor="#443a66" /></radialGradient>
          </defs>
          <circle cx="14" cy="14" r="13.500" fill="url(#siri)" stroke="#8c86a8" />
          <path d="M3 9q9-8 13 4-9 0-13-4" fill="#e2467c" opacity=".9" />
          <path d="M4 20q3-8 10-6-2 8-10 6" fill="#3f7be0" opacity=".7" />
          <path d="M10 23q8 2 13-8-9-2-13 8" fill="#52c8a0" opacity=".7" />
          <circle cx="15" cy="13" r="3" fill="#fff" opacity=".85" />
        </svg>
        <time className="ml-[31px] text-[26px] whitespace-nowrap">Чт, 27 янв.&nbsp; 20:39</time>
      </div>
    </header>
  );
}

/* ------------------------------------------------------------------ */
/* Control bar                                                         */
/* ------------------------------------------------------------------ */
const GROUP = "flex h-[60px] items-center rounded-[20px] border border-[#9a9a9a] bg-[#9d9d9d]";
function ToolButton({ label, children, className = "w-[66px] text-[#4b4b4b]" }: { label: string; children: React.ReactNode; className?: string }) {
  return (
    <button type="button" aria-label={label} className={`flex h-14 items-center justify-center ${className}`}>
      {children}
    </button>
  );
}
function Ico({ w = 40, h = 40, sw = 2.5, children }: { w?: number; h?: number; sw?: number; children: React.ReactNode }) {
  return (
    <svg width={w} height={h} viewBox={`0 0 ${w} ${h}`} fill="none" stroke="currentColor" strokeWidth={sw} strokeLinecap="round" strokeLinejoin="round" aria-hidden="true">
      {children}
    </svg>
  );
}

function Lcd() {
  return (
    <div className="flex h-24 w-[1080px] shrink-0 overflow-hidden rounded-[14px] bg-[#22252e] text-[#c8d8ea]">
      <div className="w-[297px] border-r-2 border-[#2c303a] pl-[13px]">
        <p className="h-12 text-[39px] leading-[48px] whitespace-nowrap">01:00:31:24.24</p>
        <p className="flex h-11 text-[39px] leading-[44px]">
          <span className="w-[52px] text-[#343842]">00</span>
          <span className="w-[61px]">19</span>
          <span className="w-[43px]">2</span>
          <span className="w-[42px]">3</span>
          <span className="w-[23px] text-[#343842]">0</span>
          <span>36</span>
        </p>
      </div>
      <div className="w-[202px] border-r-2 border-[#2c303a] pl-4">
        <p className="h-12 text-[39px] leading-[48px]">138,0000</p>
        <p className="text-[28px] leading-[48px] whitespace-nowrap">Keep Tempo</p>
      </div>
      <div className="w-[144px] border-r-2 border-[#2c303a]">
        <p className="h-12 pl-[43px] text-[37px] leading-[48px]">4/4</p>
        <p className="pl-[63px] text-[28px] leading-[48px]">/16</p>
      </div>
      <div className="w-[236px] border-r-2 border-[#2c303a] pl-[17px] text-[28px]">
        <p className="h-12 pt-[2px] leading-[52px]">No In</p>
        <p className="leading-[48px]">No Out</p>
      </div>
      <div className="w-[168px] border-r-2 border-[#2c303a] pl-[10px] text-[18px] text-[#566376]">
        <div className="flex h-12 items-center">
          <span className="w-[49px]">CPU</span>
          <span className="h-2 w-[94px] rounded-full bg-[#333740]"><span className="block h-2 w-8 rounded-full bg-[linear-gradient(90deg,#64748a_12px,#dce8f5_12px,#dce8f5_15px,#64748a_15px)]" /></span>
        </div>
        <div className="flex h-12 items-center">
          <span className="w-[49px] pl-[5px]">HD</span>
          <span className="h-2 w-[94px] rounded-full bg-[#333740]" />
        </div>
      </div>
      <button type="button" aria-label="Display options" className="flex flex-1 items-center justify-center">
        <svg width="22" height="14" viewBox="0 0 22 14" fill="none" stroke="#c8d8ea" strokeWidth="3" aria-hidden="true"><path d="m2 2 9 9 9-9" /></svg>
      </button>
    </div>
  );
}

function TitleBar() {
  return (
    <div className="flex h-[54px] shrink-0 items-center">
      <div className="flex gap-4 pl-4">
        <button type="button" aria-label="Close" className="flex size-6 items-center justify-center rounded-full bg-[#ee6a5f]"><span className="size-2 rounded-full bg-[#8c1a10]" /></button>
        <button type="button" aria-label="Minimise" className="size-6 rounded-full bg-[#f5be4f]" />
        <button type="button" aria-label="Zoom" className="size-6 rounded-full bg-[#61c454]" />
      </div>
      <h1 className="flex flex-1 items-center justify-center gap-3 pr-[124px] pb-1 text-[26px] font-bold text-[#3b3b3b]">
        <svg width="24" height="28" viewBox="0 0 24 28" aria-hidden="true">
          <path d="M0 0h16l8 8v20H0Z" fill="#dcdcdc" /><path d="m16 0 8 8h-8Z" fill="#f4f4f4" />
          <rect x="5" y="8" width="13" height="13" rx="3" fill="#8d949c" /><circle cx="11.500" cy="14.500" r="5" fill="#e4e8ec" /><path d="M11.500 9.500v10m-5-5h10m-8.500-3.500 7 7m0-7-7 7" stroke="#70787f" strokeWidth="1" />
        </svg>
        baraim.logicx - baraim - Tracks
      </h1>
    </div>
  );
}

function ControlBar() {
  return (
    <div className="flex h-[118px] shrink-0 items-start px-6 pt-[18px]">
      <div className={GROUP}>
        <ToolButton label="Library">
          <Ico><path d="M1 22v11q0 3 3 3h32q3 0 3-3V22L33 8q-1-2-3-2H10Q8 6 7 8L1 22h11q2 0 2 2 0 5 6 5t6-5q0-2 2-2h11" /><path d="M11 11h18M9 16h22" /></Ico>
        </ToolButton>
        <ToolButton label="Inspector" className="w-[66px] rounded-[18px] bg-[#666] text-white">
          <Ico sw={2.700}><circle cx="20" cy="20" r="16" /><path d="M17 18h3.500v9.500M16 28h9" /><circle cx="19.500" cy="12" r="1.200" fill="currentColor" /></Ico>
        </ToolButton>
        <ToolButton label="Quick Help">
          <Ico><circle cx="20" cy="20" r="16" /><path d="M15.500 16q0-4.500 4.500-4.500t4.500 4q0 2.500-2.500 4t-2 3.500" /><circle cx="20" cy="28" r="1" fill="currentColor" /></Ico>
        </ToolButton>
        <ToolButton label="Toolbar">
          <Ico><rect x="1" y="5" width="38" height="29" rx="4" /><path d="M1 11h38M20 16v12m-6-5.500 6 6 6-6" /></Ico>
        </ToolButton>
      </div>
      <div className={`ml-12 ${GROUP}`}>
        <ToolButton label="Smart Controls">
          <Ico><circle cx="20" cy="20" r="10.500" /><path d="m19 21-6 6" /><path d="M20 3v.1M7 7.500v.1M33 7.500v.1M2 20h.1M38 20h.1M7 33v.1M33 33v.1" strokeWidth="4" /></Ico>
        </ToolButton>
        <ToolButton label="Mixer">
          <Ico w={36}><path d="M6 6v18m0 7v4M18 6v7m0 7v15M30 6v18m0 7v4" /><circle cx="6" cy="27" r="3.500" /><circle cx="18" cy="16.500" r="3.500" /><circle cx="30" cy="27" r="3.500" /></Ico>
        </ToolButton>
        <ToolButton label="Editors">
          <Ico w={28} sw={2.300}><path d="M6 4q0 6 5 15l6 9M22 4q0 6-5 15l-6 9" /><circle cx="7.500" cy="32" r="4.500" /><circle cx="20.500" cy="32" r="4.500" /></Ico>
        </ToolButton>
      </div>
      <div className={`ml-[74px] ${GROUP}`}>
        <ToolButton label="Rewind" className="w-[72px] text-[#4b4b4b]"><svg width="48" height="30" viewBox="0 0 48 30" fill="currentColor" aria-hidden="true"><path d="M0 15 22 1v12L47 1v28L22 17v12Z" /></svg></ToolButton>
        <ToolButton label="Go to Beginning" className="w-[78px] text-[#4b4b4b]"><svg width="34" height="30" viewBox="0 0 34 30" fill="currentColor" aria-hidden="true"><path d="M1 1h7v12L33 1v28L8 17v12H1Z" /></svg></ToolButton>
        <ToolButton label="Play" className="w-[76px] text-[#4b4b4b]"><svg width="28" height="30" viewBox="0 0 28 30" fill="currentColor" aria-hidden="true"><path d="M1 1v28l26-14Z" /></svg></ToolButton>
        <ToolButton label="Record" className="w-[70px]"><span className="size-[34px] rounded-full bg-[#bb3d31]" /></ToolButton>
        <ToolButton label="Cycle" className="w-[72px] rounded-[18px] bg-[#9c7f39] text-white">
          <Ico sw={4}><path d="M3 20v-4q0-5 5-5h16M37 20v4q0 5-5 5H16" strokeLinecap="butt" /><path d="m22 4 10 7-10 7Z" fill="currentColor" strokeWidth="1" /><path d="m18 22-10 7 10 7Z" fill="currentColor" strokeWidth="1" /></Ico>
        </ToolButton>
      </div>
      <div className="-mt-[18px] ml-[26px]"><Lcd /></div>
      <div className={`ml-6 ${GROUP}`}>
        <ToolButton label="Replace"><Ico w={32}><path d="M2 7q0-2 2-2h24q2 0 2 2v14q0 14-14 14T2 21Z" /><path d="m10 13 12 13m0-13L10 26" /></Ico></ToolButton>
        <ToolButton label="Tuner" className="w-[66px] text-[#868686]"><Ico w={36}><path d="M25 3 13 18q-3 6 1 8t7-2L34 12M13 26 3 37" strokeWidth="3" /></Ico></ToolButton>
        <ToolButton label="Solo">
          <span className="flex size-8 items-center justify-center rounded-[5px] border-[3px] border-[#4b4b4b] text-[24px] leading-none font-medium">S</span>
        </ToolButton>
      </div>
      <button type="button" aria-label="Count-in" className="mt-[2px] ml-[50px] flex h-14 w-[64px] items-baseline justify-center rounded-[18px] border border-[#8f6aa8] bg-[#7733a3] leading-[52px] font-semibold text-white">
        <span className="text-[16px]">1</span><span className="text-[20px]">2</span><span className="text-[24px]">3</span><span className="text-[28px]">4</span>
      </button>
      <button type="button" aria-label="More" className="mt-[17px] ml-[22px] text-[#5a5a5a]">
        <Ico w={26} h={26}><path d="m2 2 9 11-9 11M14 2l9 11-9 11" /></Ico>
      </button>
      <div className={`ml-auto ${GROUP}`}>
        <ToolButton label="List Editors"><Ico w={36} h={30} sw={3}><path d="M11 4h23M11 15h23M11 26h23M3 4h.1M3 15h.1M3 26h.1" /></Ico></ToolButton>
        <ToolButton label="Note Pads"><Ico w={34} h={32}><rect x="2" y="2" width="30" height="28" rx="4" /><path d="M2 3h30v4H2Z" fill="currentColor" /><path d="M8 13h18M8 18h18M8 23h11" strokeWidth="2" /></Ico></ToolButton>
        <ToolButton label="Loop Browser"><Ico sw={2.800}><path d="M2 35h13q4-1 0-4-9-4-9-13Q6 3 20 3t14 15q0 9-9 13-4 3 0 4h13" /></Ico></ToolButton>
        <ToolButton label="Browsers"><Ico w={48} h={42}><path d="M14 13H8l-2-3H2v24h22" /><path d="M18 26V3h10l7 7v4M28 3v7h7M2 17h11M35 36V19l10-3v16" /><ellipse cx="31" cy="37" rx="4" ry="3.500" fill="currentColor" /><ellipse cx="41" cy="33" rx="4" ry="3.500" fill="currentColor" /></Ico></ToolButton>
      </div>
    </div>
  );
}

/* ------------------------------------------------------------------ */
/* Tracks area toolbars                                                */
/* ------------------------------------------------------------------ */
const PILL = "flex h-10 items-center justify-center overflow-hidden rounded-[10px] border border-x-[#555] border-t-[#707070] border-b-[#383838] bg-[#5a5a5a] text-white";
const Chevron = () => (
  <svg width="16" height="10" viewBox="0 0 16 10" fill="none" stroke="#a8a8a8" strokeWidth="3" strokeLinecap="round" aria-hidden="true"><path d="m2 2 6 6 6-6" /></svg>
);
const UpDown = ({ className }: { className: string }) => (
  <svg className={`pointer-events-none ${className}`} width="16" height="24" viewBox="0 0 16 24" fill="none" stroke="#b5b5b5" strokeWidth="2.500" strokeLinecap="round" aria-hidden="true"><path d="m2 8 6-6 6 6M2 16l6 6 6-6" /></svg>
);
const RANGE =
  "h-3 w-[92px] appearance-none rounded-full bg-[#303030] [&::-webkit-slider-thumb]:size-6 [&::-webkit-slider-thumb]:appearance-none [&::-webkit-slider-thumb]:rounded-full [&::-webkit-slider-thumb]:bg-[#a3a3a3]";

function TracksToolbar() {
  return (
    <div className="flex h-[75px] shrink-0 items-center border-b-2 border-[#3d3d3d] pr-[18px] pl-5 text-[25px] font-medium">
      <button type="button" aria-label="Up" className="flex h-10 w-[66px] items-center justify-center rounded-[10px] border border-[#444] bg-[#505050] text-[#8a8a8a]">
        <Ico w={22} h={26}><path d="m2 10 8-8 8 8M10 2v18q0 4 4 4h4" /></Ico>
      </button>
      <div className={`ml-[18px] ${PILL}`}>
        <button type="button" className="flex w-[118px] items-center justify-between pr-[16px] pl-5">Edit <Chevron /></button>
        <button type="button" className="flex w-[192px] items-center justify-between border-l-2 border-[#484848] pr-[16px] pl-[19px]">Functions <Chevron /></button>
        <button type="button" className="flex w-[130px] items-center justify-between border-l-2 border-[#484848] pr-[14px] pl-[19px]">View <Chevron /></button>
      </div>
      <div className={`ml-[18px] ${PILL}`}>
        <button type="button" aria-label="Live Loops" className="flex w-[60px] justify-center">
          <svg width="26" height="26" viewBox="0 0 26 26" fill="#fff" aria-hidden="true">{[0, 9, 18].flatMap((x) => [0, 9, 18].map((y) => <rect key={`${x}-${y}`} x={x} y={y} width="7.500" height="7.500" rx="1.500" />))}</svg>
        </button>
        <button type="button" aria-label="Tracks view" className="flex h-full w-[64px] items-center justify-center border-l-2 border-[#484848] bg-[#3a6db4]">
          <svg width="30" height="22" viewBox="0 0 30 22" fill="#fff" aria-hidden="true"><rect width="13" height="6" rx="1" /><rect x="15" width="15" height="6" rx="1" /><rect y="8" width="18" height="6" rx="1" /><rect x="20" y="8" width="10" height="6" rx="1" /><rect y="16" width="30" height="6" rx="1" /></svg>
        </button>
      </div>
      <div className={`ml-[18px] ${PILL}`}>
        <button type="button" aria-label="Automation" className="flex w-[61px] justify-center">
          <Ico w={38} h={28}><circle cx="12" cy="19" r="4.500" fill="currentColor" /><circle cx="25" cy="8" r="4.500" fill="currentColor" /><path d="M2 22h7l18-15h9" /></Ico>
        </button>
        <button type="button" aria-label="Flex" className="flex w-[63px] justify-center border-l-2 border-[#484848]">
          <Ico w={36} h={28}><path d="M2 4v20q4 0 7-4L27 8q3-4 7-4v20q-4 0-7-4L9 8Q6 4 2 4Z" /></Ico>
        </button>
      </div>
      <button type="button" aria-label="Catch Playhead" className={`ml-[18px] w-[66px] ${PILL}`}>
        <Ico w={28} h={28} sw={2}><path d="M10 2h8v5l-4 4-4-4Z" fill="currentColor" /><path d="M14 8v18M3 10l5 6-5 8M25 10l-5 6 5 8" /></Ico>
      </button>

      <div className={`ml-auto ${PILL}`}>
        <button type="button" aria-label="Left-click tool" className="flex w-[84px] items-center justify-center gap-3 pl-1">
          <svg width="20" height="28" viewBox="0 0 20 28" fill="#fff" aria-hidden="true"><path d="M3 1v21l5-4 4 9 4-2-4-8h6Z" /></svg>
          <Chevron />
        </button>
        <button type="button" aria-label="Command-click tool" className="flex w-[84px] items-center justify-center gap-3 border-l-2 border-[#484848]">
          <svg width="24" height="26" viewBox="0 0 24 26" fill="none" stroke="#fff" aria-hidden="true"><path d="m2 2 16 18" strokeWidth="4" /><path d="m18 20 4 4" strokeWidth="2" /></svg>
          <Chevron />
        </button>
      </div>
      <label htmlFor="snap" className="w-[100px] pr-[10px] text-right text-[#ababab]">Snap:</label>
      <span className="relative flex">
        <select id="snap" className="h-10 w-[320px] appearance-none rounded-[10px] border border-x-[#555] border-t-[#707070] border-b-[#383838] bg-[#5a5a5a] pl-[19px] text-white"><option>Smart</option></select>
        <UpDown className="absolute top-2 right-3" />
      </span>
      <label htmlFor="drag" className="w-[94px] pr-[9px] text-right text-[#ababab]">Drag:</label>
      <span className="relative flex">
        <select id="drag" className="h-10 w-[202px] appearance-none rounded-[10px] border border-x-[#555] border-t-[#707070] border-b-[#383838] bg-[#5a5a5a] pl-[19px] text-white"><option>No Overlap</option></select>
        <UpDown className="absolute top-2 right-3" />
      </span>
      <button type="button" aria-label="Waveform Zoom" className={`ml-[18px] w-[62px] ${PILL}`}>
        <Ico w={30} h={28} sw={2}><path d="M2 11v6M6 8v12M10 5v18M14 1v26M18 4v20M22 8v12M26 11v6" /></Ico>
      </button>
      <div className={`ml-[18px] ${PILL}`}>
        <button type="button" aria-label="Fit vertically" className="flex w-[62px] justify-center"><Ico w={22} h={28}><path d="M5 2h12M5 26h12M11 4v20M7 8l4-4 4 4M7 20l4 4 4-4" /></Ico></button>
        <button type="button" aria-label="Fit horizontally" className="flex w-[62px] justify-center border-l-2 border-[#484848]"><Ico w={28} h={22}><path d="M2 5v12M26 5v12M4 11h20M8 7l-4 4 4 4M20 7l4 4-4 4" /></Ico></button>
      </div>
      <div className="ml-4 flex h-10 w-[300px] items-center rounded-[10px] bg-[#3a3a3a] text-[#a8a8a8]">
        <span className="flex w-[149px] items-center border-r-2 border-[#484848] pl-3">
          <Ico w={16} h={24}><path d="M8 2v20M3 7l5-5 5 5M3 17l5 5 5-5" /></Ico>
          <input type="range" aria-label="Vertical zoom" min={0} max={100} defaultValue={17} className={`ml-4 ${RANGE}`} />
        </span>
        <span className="flex items-center pl-3">
          <Ico w={22} h={16}><path d="M2 8h18M7 3 2 8l5 5M15 3l5 5-5 5" /></Ico>
          <input type="range" aria-label="Horizontal zoom" min={0} max={100} defaultValue={0} className={`ml-3 ${RANGE}`} />
        </span>
      </div>
    </div>
  );
}

function HeaderButtons() {
  return (
    <div className="flex h-[75px] shrink-0 items-center bg-[#474747] px-5 shadow-[0_2px_4px_rgba(0,0,0,0.4)]">
      <button type="button" aria-label="Add track" className={`w-[66px] ${PILL}`}><Ico w={24} h={24}><path d="M12 2v20M2 12h20" /></Ico></button>
      <button type="button" aria-label="Duplicate track" className={`ml-5 w-[66px] ${PILL}`}>
        <Ico w={34} h={28}><path d="M6 19H4q-2 0-2-3V4q0-2 2-2h20q3 0 3 3" /><rect x="8" y="8" width="24" height="18" rx="3" /><path d="M20 12v10m-5-5h10" /></Ico>
      </button>
      <button type="button" aria-label="Solo mode" className={`ml-5 w-[66px] text-[26px] font-medium ${PILL}`}>S</button>
      <button type="button" aria-label="Track header options" className={`ml-auto w-[66px] ${PILL}`}>
        <Ico w={32} h={26}><rect x="2" y="2" width="28" height="22" rx="3" /><path d="M2 7h28M16 11v8m-4-3 4 4 4-4" /></Ico>
      </button>
    </div>
  );
}

function Ruler() {
  return (
    <div className="relative h-[75px] shrink-0 overflow-hidden border-b-2 border-[#262626] bg-[#323232]">
      <div className="absolute top-px left-[19px] h-9 bg-[#ba9c45]" style={{ width: barX(92) - 19 }} />
      <div className="absolute top-px right-0 h-9 bg-[repeating-linear-gradient(135deg,#2b2b2b_0px,#2b2b2b_7px,#363636_7px,#363636_14px)]" style={{ left: barX(92) }} />
      <div className="absolute top-[37px] right-0 left-[19px] h-[2px] bg-[#1c1c1c]" />
      <svg className="absolute top-1 left-0" width="18" height="28" aria-hidden="true"><path d="M0 0 16 9v10L0 27Z" fill="#696969" /></svg>
      {BARS.map((b) => (
        <div key={b} className="absolute top-[41px] h-[33px] w-[2px] bg-[#717171]" style={{ left: barX(b) - 1 }} />
      ))}
      {MAJOR.map((b) => (
        <div key={b} className={`absolute top-[5px] h-8 text-[24px] leading-6 font-medium text-black ${b > 1 ? "border-l-2 border-black pl-[6px]" : "pl-2"}`} style={{ left: barX(b) - 1 }}>{b}</div>
      ))}
    </div>
  );
}

const TINT = { green: "bg-[#2a5a33]/20", blue: "bg-[#1e325f]/20" };

function Lanes() {
  return (
    <div className="relative flex-1 overflow-hidden bg-[#2d2d2d]">
      {BARS.map((b) => (
        <div key={b} className="absolute inset-y-0 w-[2px] bg-[#414141]" style={{ left: barX(b) - 1 }} />
      ))}
      {TRACKS.map((t, i) => (
        <div key={i} className={`relative h-14 border-b-2 border-black/25 ${t.tint ? TINT[t.tint] : ""} ${t.selected ? "shadow-[inset_0_0_0_60px_rgba(255,255,255,0.03)]" : ""}`}>
          {t.title && (
            <span className={`absolute top-[14px] left-[18px] text-[22px] leading-7 font-bold ${t.tint === "blue" ? "text-[#a6cbff]" : "text-[#b4ffb0]"}`}>{t.title}</span>
          )}
          {t.regions.map((g, k) => <RegionBox key={k} {...g} />)}
        </div>
      ))}
      <div className="pointer-events-none absolute inset-y-0 left-0 w-2 bg-[linear-gradient(90deg,rgba(0,0,0,0.4),transparent)]" />
    </div>
  );
}

/* ------------------------------------------------------------------ */
/* Dock                                                                */
/* ------------------------------------------------------------------ */
function G({ id, a, b }: { id: string; a: string; b: string }) {
  return <linearGradient id={id} x1="0" y1="0" x2="0" y2="1"><stop offset="0" stopColor={a} /><stop offset="1" stopColor={b} /></linearGradient>;
}
function App78({ name, a, b, running, rx = 18, children }: { name: string; a: string; b: string; running?: boolean; rx?: number; children?: React.ReactNode }) {
  const id = `g-${name.replace(/\s/g, "")}`;
  return (
    <a href={`#${name}`} aria-label={name} className="relative block size-[78px]">
      <svg width="78" height="78" viewBox="0 0 78 78" className="overflow-visible" aria-hidden="true">
        <defs><G id={id} a={a} b={b} /></defs>
        {a !== "none" && <rect width="78" height="78" rx={rx} fill={`url(#${id})`} />}
        {children}
      </svg>
      {running && <span className="absolute -bottom-[25px] left-[35px] size-2 rounded-full bg-[#a090bc]" />}
    </a>
  );
}

function Dock() {
  const petals = ["#f7963a", "#f5d93f", "#a8cf4a", "#7fbf9b", "#6aa8e0", "#8a7fc9", "#c56fae", "#ee5f52"];
  return (
    <nav aria-label="Dock" className="flex h-[126px] gap-[26px] rounded-[36px] border-2 border-[#473c5d] bg-[linear-gradient(90deg,#1b1432,#1e1537_45%,#3a1356_58%,#47165f_68%,#3a145c_85%,#2a1348)] px-4 pt-[17px]">
      <App78 name="Finder" a="#5ac8fa" b="#2a6df0" running>
        <path d="M43 0h17q18 0 18 18v42q0 18-18 18H48q-2-12-2-32H34Q34 20 43 0Z" fill="#e4e9f0" />
        <path d="M21 23v7M57 23v7" stroke="#1b2b45" strokeWidth="3" strokeLinecap="round" /><path d="M16 52q23 20 46 0" fill="none" stroke="#1b2b45" strokeWidth="3" strokeLinecap="round" />
      </App78>
      <App78 name="Launchpad" a="#c0bdc9" b="#aaa8b2">
        {["#7be04c", "#f5c02e", "#ef8a2c", "#e0362c", "#9aa0a6", "#f24b5e", "#a24de0", "#3a8ef5", "#5cc99a"].map((c, i) => (
          <rect key={i} x={13 + (i % 3) * 19} y={13 + Math.floor(i / 3) * 19} width="14" height="14" rx="4" fill={c} />
        ))}
      </App78>
      <App78 name="Safari" a="#ffffff" b="#dedede" running>
        <circle cx="39" cy="39" r="33" fill="#3a8fec" />
        <circle cx="39" cy="39" r="29" fill="none" stroke="#cfe6ff" strokeWidth="4" strokeDasharray="1 2.600" />
        <path d="M62 18 43 43l-8-8Z" fill="#ee4b40" /><path d="M16 60 35 35l8 8Z" fill="#f4f4f4" />
      </App78>
      <App78 name="Messages" a="#86f07f" b="#5cc24e">
        <ellipse cx="39" cy="37" rx="29" ry="24" fill="#ecf8ea" /><path d="M22 53q1 8-5 12 10-1 15-7Z" fill="#e0f4de" />
      </App78>
      <App78 name="Logic Pro" a="#3a3a3e" b="#000000" running>
        <rect x="1" y="1" width="76" height="76" rx="17" fill="none" stroke="#b9bec8" strokeWidth="2.500" />
        <circle cx="39" cy="37" r="28" fill="#aab3c1" />
        {[0, 45, 90, 135, 180, 225, 270, 315].map((a) => <path key={a} d="M39 37 33 9.500q6-1.500 11 0Z" fill={a % 90 ? "#dfe5ee" : "#8994a5"} opacity=".9" transform={`rotate(${a} 39 37)`} />)}
        <circle cx="39" cy="37" r="10" fill="none" stroke="#6d7888" strokeWidth="1" /><circle cx="39" cy="37" r="2" fill="#333" />
        <rect x="28" y="68" width="22" height="5" fill="#c5ced8" />
      </App78>
      <App78 name="Mail" a="#3b78ee" b="#5fc5f8">
        <rect x="11" y="21" width="56" height="36" rx="3" fill="#eef1f3" /><path d="m12 23 22 22q5 4 10 0l22-22M12 56l20-18M66 56 46 38" fill="none" stroke="#a7adb3" strokeWidth="1.500" />
      </App78>
      <App78 name="Photos" a="#ffffff" b="#fafafa">
        {petals.map((c, i) => <rect key={i} x="30" y="5" width="18" height="32" rx="9" fill={c} opacity=".85" transform={`rotate(${i * 45} 39 39)`} />)}
      </App78>
      <App78 name="FaceTime" a="#85ec7e" b="#58bd4b">
        <rect x="11" y="22" width="38" height="35" rx="9" fill="#eef9ec" /><path d="m52 36 11-10q3-2 3 2v23q0 4-3 2L52 43Z" fill="#eef9ec" />
      </App78>
      <App78 name="WhatsApp" a="#86ea7a" b="#4cc034">
        <foreignObject x="7" y="6" width="66" height="66"><FaWhatsapp size={64} color="#fff" /></foreignObject>
      </App78>
      <App78 name="Calendar" a="#fbfbfb" b="#f0eeec">
        <path d="M0 24V18Q0 0 18 0h42q18 0 18 18v6Z" fill="#e25a50" />
        <text x="39" y="19" textAnchor="middle" fontSize="16" fontWeight="600" fill="#fff">ЯНВ.</text>
        <text x="39" y="66" textAnchor="middle" fontSize="46" fontWeight="300" fill="#222">27</text>
      </App78>
      <App78 name="Contacts" a="none" b="none">
        <rect x="72" y="10" width="7" height="17" rx="2" fill="#c9c9c9" /><rect x="72" y="27" width="7" height="14" rx="2" fill="#55aef0" /><rect x="72" y="41" width="7" height="14" rx="2" fill="#ee8a3a" /><rect x="72" y="55" width="7" height="13" rx="2" fill="#6fcf62" />
        <rect width="77" height="78" rx="17" fill="#a98451" />
        <circle cx="39" cy="39" r="25" fill="none" stroke="#856335" strokeWidth="2" /><ellipse cx="39" cy="34" rx="8" ry="9" fill="#8b683a" /><path d="M22 56q3-9 17-9t17 9q-17 14-34 0" fill="#8b683a" />
      </App78>
      <App78 name="Notes" a="#fbfbf8" b="#ecebe6">
        <path d="M0 20v-2Q0 0 18 0h42q18 0 18 18v2Z" fill="#fbcf47" /><path d="M0 39h78M0 58h78" stroke="#d4d4cf" strokeWidth="1.500" /><path d="M1 23h76" stroke="#aaa" strokeWidth="1.500" strokeDasharray="1 2" />
      </App78>
      <App78 name="Music" a="#f5606e" b="#e83a46" running>
        <path d="M27 19 56 13v37a7.500 7 0 1 1-4-7V26L31 30v26a7.500 7 0 1 1-4-7Z" fill="#fff" />
      </App78>
      <App78 name="Podcasts" a="#bb62ea" b="#7128b4">
        <g fill="none" stroke="#fff" strokeWidth="3.500"><path d="M26 60A26 26 0 1 1 52 60" /><path d="M29 48A16 16 0 1 1 49 48" /></g>
        <circle cx="39" cy="35" r="6" fill="#fff" /><path d="M33 47q0-3 6-3t6 3l-2 19q-.5 3-4 3t-4-3Z" fill="#fff" />
      </App78>
      <App78 name="App Store" a="#4fb2f3" b="#2459dc">
        <g stroke="#fff" strokeWidth="6" strokeLinecap="round"><path d="M43 17 28 46M35 17l25 43M14 49h29M53 49h11M20 58l-2 4" /></g>
      </App78>
      <App78 name="System Preferences" a="#d6e0e6" b="#92918e">
        <circle cx="39" cy="39" r="33" fill="#3c3c3c" /><circle cx="39" cy="39" r="28" fill="#969696" stroke="#1e1e1e" strokeWidth="3" strokeDasharray="2 1.500" />
        <circle cx="39" cy="39" r="23" fill="#4a4a4a" /><circle cx="39" cy="39" r="14" fill="none" stroke="#a8a8a8" strokeWidth="4" />
        <path d="M39 39 27 19M39 39 27 59M39 39h24" stroke="#b4b4b4" strokeWidth="3.500" /><circle cx="39" cy="39" r="5" fill="#777" />
      </App78>
      <span className="mx-[9px] mt-[-2px] h-[94px] w-[2px] shrink-0 bg-[#7a5a8c]" />
      <App78 name="AnyDesk" a="#ea5646" b="#ea5245" rx={9}>
        <path d="m31 22 17 17-17 17-17-17Z" fill="#fff" /><path d="m42 22 4 0 17 17-17 17h-4l15-17Z" fill="#fff" />
      </App78>
      <App78 name="Remote Desktop" a="#c9552f" b="#bd4f2c">
        <circle cx="39" cy="39" r="30" fill="#f4f3f2" /><path d="M53 21 40 33l11 11M27 35l10 11-11 12" fill="none" stroke="#c9552f" strokeWidth="6.500" />
      </App78>
      <a href="#Speedtest" aria-label="Speedtest" className="-mx-2 -mt-2 block size-[94px]">
        <svg width="94" height="94" viewBox="0 0 94 94" aria-hidden="true"><circle cx="47" cy="47" r="47" fill="#0c0c20" /><path d="M21 73A35.500 35.500 0 1 1 73 73" fill="none" stroke="#fff" strokeWidth="7" /><path d="m40 50 16-21 5 3-12 23Z" fill="#fff" /></svg>
      </a>
      <span className="mx-[9px] mt-[-2px] h-[94px] w-[2px] shrink-0 bg-[#7a5a8c]" />
      <App78 name="Trash" a="none" b="none">
        <path d="M5 4q34-14 68 0L64 76q-2 7-24 7T15 76Z" fill="#6c7478" opacity=".9" /><ellipse cx="39" cy="5" rx="34" ry="8" fill="#5c5670" stroke="#8f8a9c" strokeWidth="1.500" />
        <path d="M14 68q26 8 51 0l-1 8q-2 6-25 6t-25-6Z" fill="#a7adaf" opacity=".5" />
      </App78>
    </nav>
  );
}

/* ------------------------------------------------------------------ */
export default function App() {
  return (
    <div className="flex h-screen w-full flex-col overflow-hidden bg-[linear-gradient(90deg,#08041a,#10052e_35%,#3a0a66_55%,#4b0d6e_68%,#160540_90%)] [font-family:Inter,'Noto_Sans',sans-serif]">
      <MenuBar />
      <div className="mt-[2px] flex min-h-0 flex-1 flex-col overflow-hidden rounded-[20px] border-t-2 border-[#c8c8c8] bg-[#a4a4a4]">
        <TitleBar />
        <ControlBar />
        <div className="flex min-h-0 flex-1 overflow-hidden bg-[#474747]">
          <aside className="flex w-[358px] shrink-0 flex-col border-l-2 border-[#6a6a6a]">
            <DisclosureRow label="Region:" value="Default" />
            <DisclosureRow label="Track:" value="trance pad2" />
            <div className="-ml-[2px] flex flex-1 bg-[#555]">
              <Strip kind="inst" />
              <Strip kind="bus" />
            </div>
          </aside>
          <span className="w-1 shrink-0 bg-black" />
          <main className="flex min-w-0 flex-1 flex-col">
            <TracksToolbar />
            <div className="flex min-h-0 flex-1">
              <div className="flex w-[638px] shrink-0 flex-col">
                <HeaderButtons />
                <ul className="flex min-h-0 flex-1 flex-col overflow-hidden">
                  {TRACKS.map((t, i) => <TrackRow key={t.name} t={t} n={i + 1} />)}
                </ul>
              </div>
              <div className="relative flex min-w-0 flex-1 flex-col">
                <Ruler />
                <Lanes />
                <div className="pointer-events-none absolute top-[39px] bottom-1 left-[362px] flex w-[34px] flex-col items-center">
                  <svg width="34" height="36" viewBox="0 0 34 36" className="shrink-0" aria-hidden="true"><path d="M0 4q0-4 4-4h26q4 0 4 4v16L17 35 0 20Z" fill="#b4b4b4" /><path d="M17 8v26" stroke="#fff" strokeWidth="2" /></svg>
                  <span className="w-1 flex-1 border-x border-black/60 bg-white" />
                </div>
              </div>
            </div>
          </main>
        </div>
      </div>
      <div className="flex h-[138px] shrink-0 justify-center pt-[2px]">
        <Dock />
      </div>
    </div>
  );
}
